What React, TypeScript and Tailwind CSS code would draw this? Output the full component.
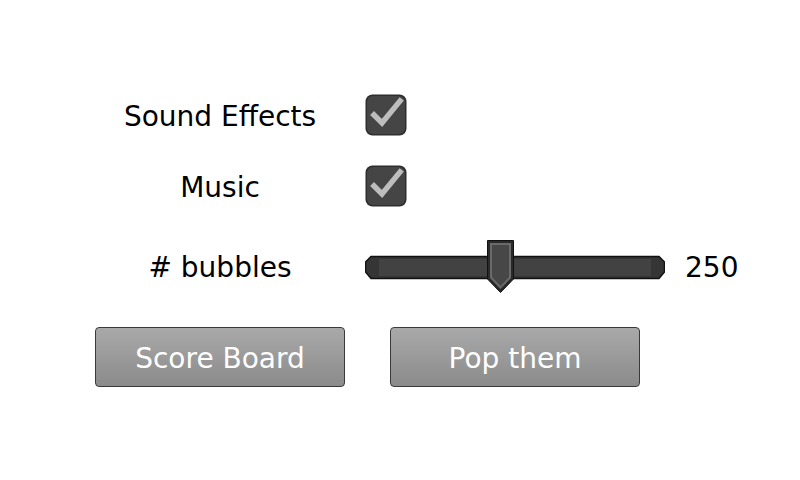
import React from 'react'

const font = { fontFamily: '"DejaVu Sans", Verdana, sans-serif' }

function CheckBox() {
  return (
    <svg width="42" height="42" viewBox="0 0 42 42">
      <rect x="0.5" y="0.5" width="41" height="41" rx="7" fill="#2e2e2e" />
      <rect x="2" y="2" width="38" height="38" rx="6" fill="#454545" />
      <path d="M9 21 L17 29 L35 7" fill="none" stroke="#bdbdbd" strokeWidth="5.5" strokeLinecap="square" />
    </svg>
  )
}

function Slider({ value, max }: { value: number; max: number }) {
  const thumbX = Math.round((value / max) * 244)
  return (
    <svg width="300" height="54" viewBox="0 0 300 54">
      <polygon points="6,16.5 294,16.5 299.5,22 299.5,32 294,38.5 6,38.5 0.5,32 0.5,22" fill="#353535" stroke="#111" strokeWidth="1.5" />
      <rect x="14" y="19" width="272" height="17" fill="#424242" />
      <g transform={`translate(${thumbX},0)`}>
        <polygon points="0.5,0.5 26.5,0.5 26.5,39 13.5,52.5 0.5,39" fill="#2a2a2a" stroke="#111" strokeWidth="1" />
        <polygon points="3,3 24,3 24,38 13.5,49 3,38" fill="#6a6a6a" />
        <polygon points="5,5 22,5 22,37 13.5,46 5,37" fill="#474747" />
      </g>
    </svg>
  )
}

function GrayButton({ label }: { label: string }) {
  return (
    <button className="w-[250px] h-[60px] rounded-[4px] border border-[#3a3a3a] bg-gradient-to-b from-[#a9a9a9] to-[#8b8b8b] text-white text-[28px] leading-none pt-[3px]">
      {label}
    </button>
  )
}

export default function App() {
  return (
    <div className="w-[800px] h-[480px] bg-white pt-[94px] pl-[95px] text-black" style={font}>
      <div className="flex items-center h-[42px]">
        <div className="w-[250px] text-center text-[28px] pt-[4px]">Sound Effects</div>
        <div className="ml-[20px]"><CheckBox /></div>
      </div>
      <div className="flex items-center h-[42px] mt-[29px]">
        <div className="w-[250px] text-center text-[28px] pt-[4px]">Music</div>
        <div className="ml-[20px]"><CheckBox /></div>
      </div>
      <div className="flex items-center h-[54px] mt-[33px]">
        <div className="w-[250px] text-center text-[28px] pt-[2px]">
          # bubbles
        </div>
        <div className="ml-[20px] flex"><Slider value={250} max={500} /></div>
        <div className="ml-[20px] text-[28px] pt-[2px]">250</div>
      </div>
      <div className="flex gap-[45px] mt-[33px]">
        <GrayButton label="Score Board" />
        <GrayButton label="Pop them" />
      </div>
    </div>
  )
}
